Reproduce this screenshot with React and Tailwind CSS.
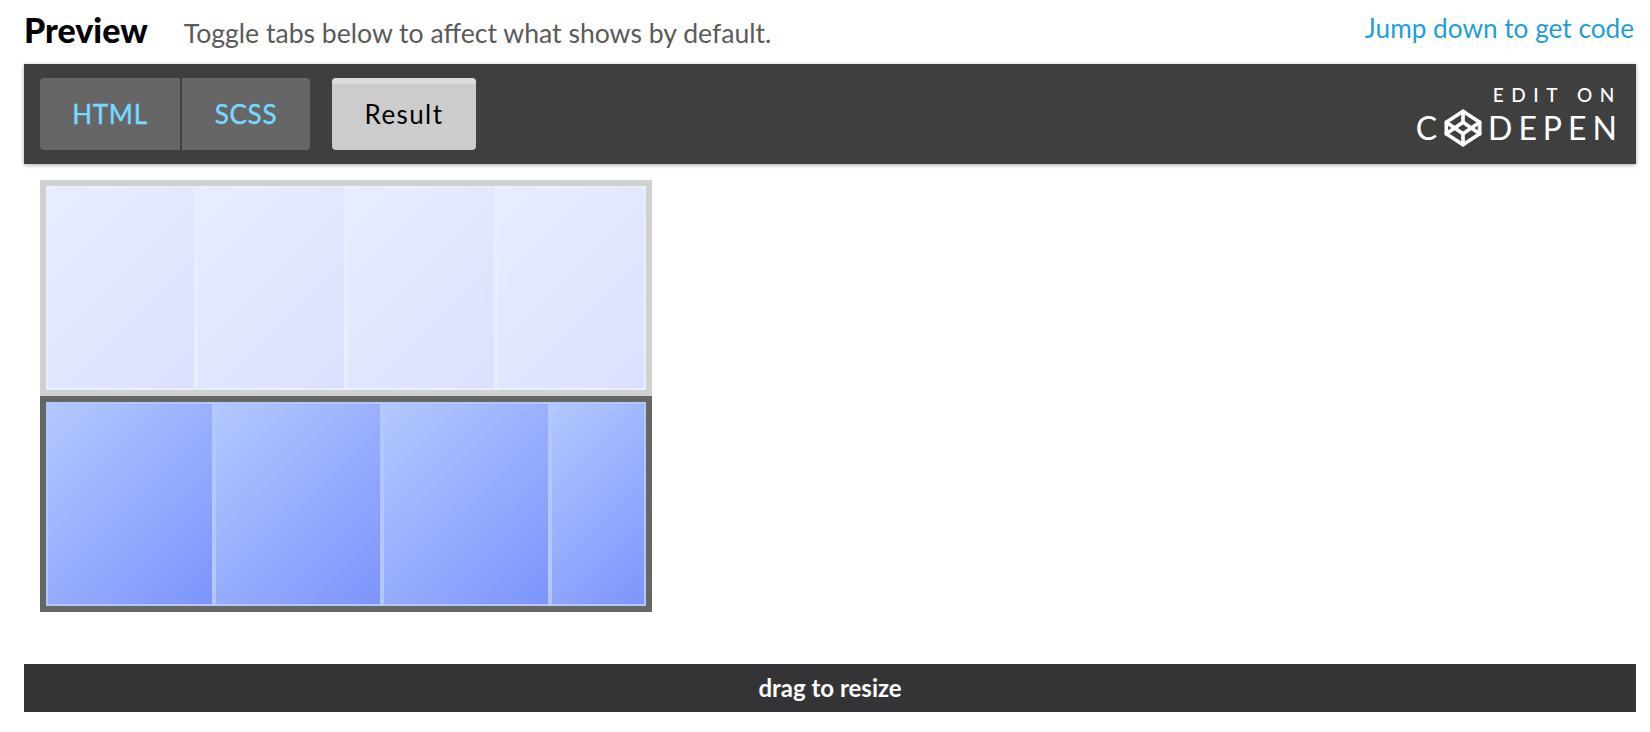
import { Codepen } from 'lucide-react';

const topRow = ['a', 'b', 'c', 'd'];
const bottomRow = [
  { id: 'a', width: 'w-[168px]' },
  { id: 'b', width: 'w-[168px]' },
  { id: 'c', width: 'w-[168px]' },
  { id: 'd', width: 'w-[96px]' },
];

export default function App() {
  return (
    <div className="h-[732px] bg-white overflow-hidden font-['Lato',sans-serif]">
      <div className="pl-6 pr-[14px]">
        <div className="flex items-start justify-between h-16">
          <div className="flex items-baseline pt-[10px]">
            <h1 className="text-[34px] leading-[40px] font-black text-black">Preview</h1>
            <p className="ml-[36px] text-[26.6px] leading-[40px] text-[#5a5a5a]">Toggle tabs below to affect what shows by default.</p>
          </div>
          <a className="pt-[8px] pr-[2px] text-[26.2px] leading-[40px] text-[#1f9ddb]">Jump down to get code</a>
        </div>

        <div className="flex items-center justify-between h-[100px] pl-4 pr-5 bg-[#3f3f3f] shadow-[0_1px_4px_rgba(0,0,0,0.35)]">
          <div className="flex items-center">
            <div className="flex h-[72px] rounded-[4px] overflow-hidden bg-[#3f3f3f]">
              <div className="flex items-center justify-center w-[140px] bg-[#666666] text-[26px] tracking-[0.7px] text-[#76daff] [-webkit-text-stroke:0.4px_#76daff]">HTML</div>
              <div className="flex items-center justify-center w-[128px] ml-[2px] bg-[#666666] text-[26px] tracking-[0.7px] text-[#76daff] [-webkit-text-stroke:0.4px_#76daff]">SCSS</div>
            </div>
            <div className="flex items-center justify-center w-[144px] h-[72px] ml-[22px] pb-[6px] rounded-[4px] border-t-[6px] border-[#dcdcdc] bg-[#cccccc] text-[26px] tracking-[1.4px] text-black">Result</div>
          </div>
          <div className="flex flex-col items-end pt-[3px] text-white">
            <div className="text-[19px] leading-[22px] font-medium tracking-[7.6px] mr-[-6px]">EDIT ON</div>
            <div className="flex items-center h-[38px] mt-[3px] text-[32px] leading-none tracking-[6px] mr-[-7px]">
              <span>C</span>
              <Codepen size={40} strokeWidth={2.2} className="mr-[5px]" />
              <span>DEPEN</span>
            </div>
          </div>
        </div>

        <div className="pt-4 pl-4">
          <div className="flex w-[612px] h-[216px] border-[6px] border-[#d1d1d1]">
            {topRow.map((id) => (
              <div
                key={id}
                className="w-[150px] border-2 border-[#e9eeff] bg-[linear-gradient(135deg,#e8edff,#dce0ff)]"
              />
            ))}
          </div>
          <div className="flex w-[612px] h-[216px] border-[6px] border-[#666666]">
            {bottomRow.map((item) => (
              <div
                key={item.id}
                className={`${item.width} border-2 border-[#b3c8ff] bg-[linear-gradient(135deg,#b3c8ff,#7d94fd)]`}
              />
            ))}
          </div>
        </div>

        <div className="mt-[52px] flex items-center justify-center h-12 bg-[#343436] text-[24px] font-bold text-white">
          drag to resize
        </div>
      </div>
    </div>
  );
}
